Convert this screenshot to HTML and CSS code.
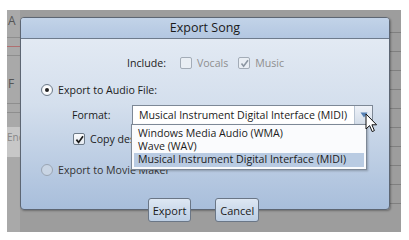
FILE: index.html
```html
<!DOCTYPE html>
<html lang="en">
<head>
    <meta charset="UTF-8">
    <meta name="viewport" content="width=device-width, initial-scale=1.0">
    <title>Export Song</title>
    <link rel="stylesheet" href="styles.css">
</head>
<body>

    <div class="app">
        <!-- the song editor behind the dialog -->
        <div class="ruler">
            <span class="letter">A</span>
            <span class="tick"></span>
            <span class="tick red"></span>
            <span class="tick"></span>
            <span class="letter f">F</span>
            <span class="tick"></span>
            <span class="tick"></span>
            <span class="band">End</span>
        </div>
        <div class="track-lines">
            <span></span><span></span><span></span><span></span><span></span><span></span><span></span><span></span><span></span><span></span>
        </div>

        <!-- dialog -->
        <div class="dialog">
            <div class="dialog-title">Export Song</div>
            <div class="dialog-body">
                <div class="row include-row">
                    <span class="label">Include:</span>
                    <span class="check disabled"></span>
                    <span class="muted">Vocals</span>
                    <span class="check disabled checked">
                        <svg viewBox="0 0 11 11" width="11" height="11"><path d="M2.5 5.5 L4.6 8.2 L9 2.2" fill="none" stroke="#8c96a2" stroke-width="1.6"/></svg>
                    </span>
                    <span class="muted">Music</span>
                </div>

                <div class="row radio-row">
                    <span class="radio on"></span>
                    <span>Export to Audio File:</span>
                </div>

                <div class="row format-row">
                    <span class="format-label">Format:</span>
                    <div class="select">
                        <span class="select-text">Musical Instrument Digital Interface (MIDI)</span>
                        <span class="select-btn">
                            <svg viewBox="0 0 8 6" width="8" height="6"><path d="M0.5 0.5 L7.5 0.5 L4 5.5 Z" fill="#5580b4"/></svg>
                        </span>
                    </div>
                </div>

                <div class="row copy-row">
                    <span class="check checked">
                        <svg viewBox="0 0 11 11" width="11" height="11"><path d="M2.4 5.6 L4.6 8.4 L9 2.2" fill="none" stroke="#1a1a1a" stroke-width="1.7"/></svg>
                    </span>
                    <span>Copy des</span>
                </div>

                <div class="row radio-row movie-row">
                    <span class="radio off"></span>
                    <span class="movie-text">Export to Movie Maker</span>
                </div>

                <div class="buttons">
                    <button>Export</button>
                    <button>Cancel</button>
                </div>
            </div>

            <!-- open dropdown -->
            <ul class="dropdown">
                <li>Windows Media Audio (WMA)</li>
                <li>Wave (WAV)</li>
                <li class="selected">Musical Instrument Digital Interface (MIDI)</li>
            </ul>
        </div>

        <!-- mouse pointer -->
        <svg class="cursor" viewBox="0 0 13 20" width="13" height="20">
            <path d="M1 1 L1 16 L4.6 12.6 L7.2 18.6 L9.4 17.6 L6.9 11.8 L11.6 11.8 Z" fill="#fff" stroke="#111" stroke-width="1" stroke-linejoin="round"/>
        </svg>
    </div>

</body>
</html>
```

FILE: styles.css
```css
body {
    margin: 0;
    padding: 10px 8px 8px 7px;
    background: #fff;
    font-family: "Open Sans", "Liberation Sans", sans-serif;
    font-size: 10.6px;
    color: #1c1c1c;
}

.app {
    position: relative;
    width: 394px;
    height: 222px;
    background: #9d9d9d;
    overflow: hidden;
}

/* left ruler of the editor */
.ruler {
    width: 13px;
    height: 100%;
    background: #a9a9a9;
    display: flex;
    flex-direction: column;
    color: #555;
}

.ruler .letter {
    font-size: 12px;
    padding: 2px 0 0 1px;
    height: 17px;
}

.ruler .letter.f {
    margin-top: 17px;
    height: 20px;
}

.ruler .tick {
    height: 8px;
    border-bottom: 1px solid #8e8e8e;
}

.ruler .tick.red {
    border-bottom-color: #b07070;
}

.ruler .band {
    margin-top: 14px;
    width: 13px;
    height: 30px;
    background: #c7c7c7;
    font-size: 10px;
    color: #888;
    line-height: 20px;
    overflow: hidden;
    white-space: nowrap;
}

.track-lines {
    position: absolute;
    top: 4px;
    right: 0;
    width: 14px;
    display: flex;
    flex-direction: column;
}

.track-lines span {
    height: 18px;
    border-bottom: 1px solid #7f7f7f;
}

/* dialog */
.dialog {
    position: absolute;
    left: 13px;
    top: 7px;
    width: 368px;
    height: 191px;
    border: 1px solid #5d6673;
    border-radius: 4px;
    background: linear-gradient(#e7edf5 0%, #d4dfed 45%, #a8bedb 100%);
    box-shadow: 1px 1px 2px rgba(0, 0, 0, 0.3);
}

.dialog-title {
    height: 20px;
    line-height: 20px;
    text-align: center;
    font-size: 12.5px;
    color: #1a1a1a;
    background: linear-gradient(#c2d3e8, #b3c7e1);
    border-bottom: 1px solid #6e7b8c;
    border-radius: 3px 3px 0 0;
}

.dialog-body {
    display: flex;
    flex-direction: column;
}

.row {
    display: flex;
    align-items: center;
    height: 14px;
}

.include-row {
    margin-top: 17px;
    padding-left: 106px;
}

.include-row .label {
    margin-right: 14px;
}

.muted {
    color: #8f8f8f;
    margin-left: 5px;
    margin-right: 10px;
}

.check {
    width: 10px;
    height: 10px;
    border: 1px solid #6d7a88;
    border-radius: 2px;
    background: linear-gradient(#fafbfd, #e4e9f0);
    display: flex;
    align-items: center;
    justify-content: center;
}

.check svg {
    flex: none;
}

.check.disabled {
    border-color: #a3acb7;
    background: #e9eef4;
}

.radio-row {
    margin-top: 13px;
    padding-left: 20px;
}

.radio {
    width: 10px;
    height: 10px;
    border: 1px solid #6f7c8a;
    border-radius: 50%;
    background: radial-gradient(circle, #fff 40%, #dde3ea);
    margin-right: 5px;
    display: flex;
    align-items: center;
    justify-content: center;
}

.radio.on::after {
    content: "";
    width: 4px;
    height: 4px;
    border-radius: 50%;
    background: #222;
}

.radio.off {
    border-color: #9aa5b3;
    background: #c9d5e4;
}

.format-row {
    margin-top: 8px;
    height: 20px;
    padding-left: 51px;
}

.format-label {
    width: 60px;
}

.select {
    width: 239px;
    height: 18px;
    border: 1px solid #7d8896;
    background: #fff;
    display: flex;
    align-items: center;
}

.select-text {
    flex: 1;
    padding-left: 6px;
    white-space: nowrap;
}

.select-btn {
    width: 17px;
    height: 18px;
    border-left: 1px solid #b8c4d2;
    background: linear-gradient(#eef2f8, #d3dde9);
    display: flex;
    align-items: center;
    justify-content: center;
}

.copy-row {
    margin-top: 7px;
    padding-left: 52px;
}

.copy-row .check {
    margin-right: 5px;
}

.movie-row {
    margin-top: 17px;
}

.movie-text {
    color: #333;
}

.buttons {
    display: flex;
    justify-content: center;
    gap: 24px;
    margin-top: 21px;
    padding-right: 3px;
}

.buttons button {
    font-family: inherit;
    font-size: 11px;
    color: #1a1a1a;
    height: 24px;
    padding: 0 4px;
    border: 1px solid #6a7686;
    border-radius: 3px;
    background: linear-gradient(#dde7f3, #bccee4);
}

/* open dropdown list of formats */
.dropdown {
    position: absolute;
    left: 110px;
    top: 106px;
    width: 230px;
    margin: 0;
    padding: 2px;
    list-style: none;
    background: #fafbfd;
    border: 1px solid #7d8896;
    box-shadow: 1px 1px 2px rgba(0, 0, 0, 0.25);
}

.dropdown li {
    height: 13px;
    line-height: 13px;
    padding-left: 4px;
    white-space: nowrap;
}

.dropdown li.selected {
    background: #b9cbe2;
    height: 14px;
}

.cursor {
    position: absolute;
    left: 358px;
    top: 103px;
}
```
